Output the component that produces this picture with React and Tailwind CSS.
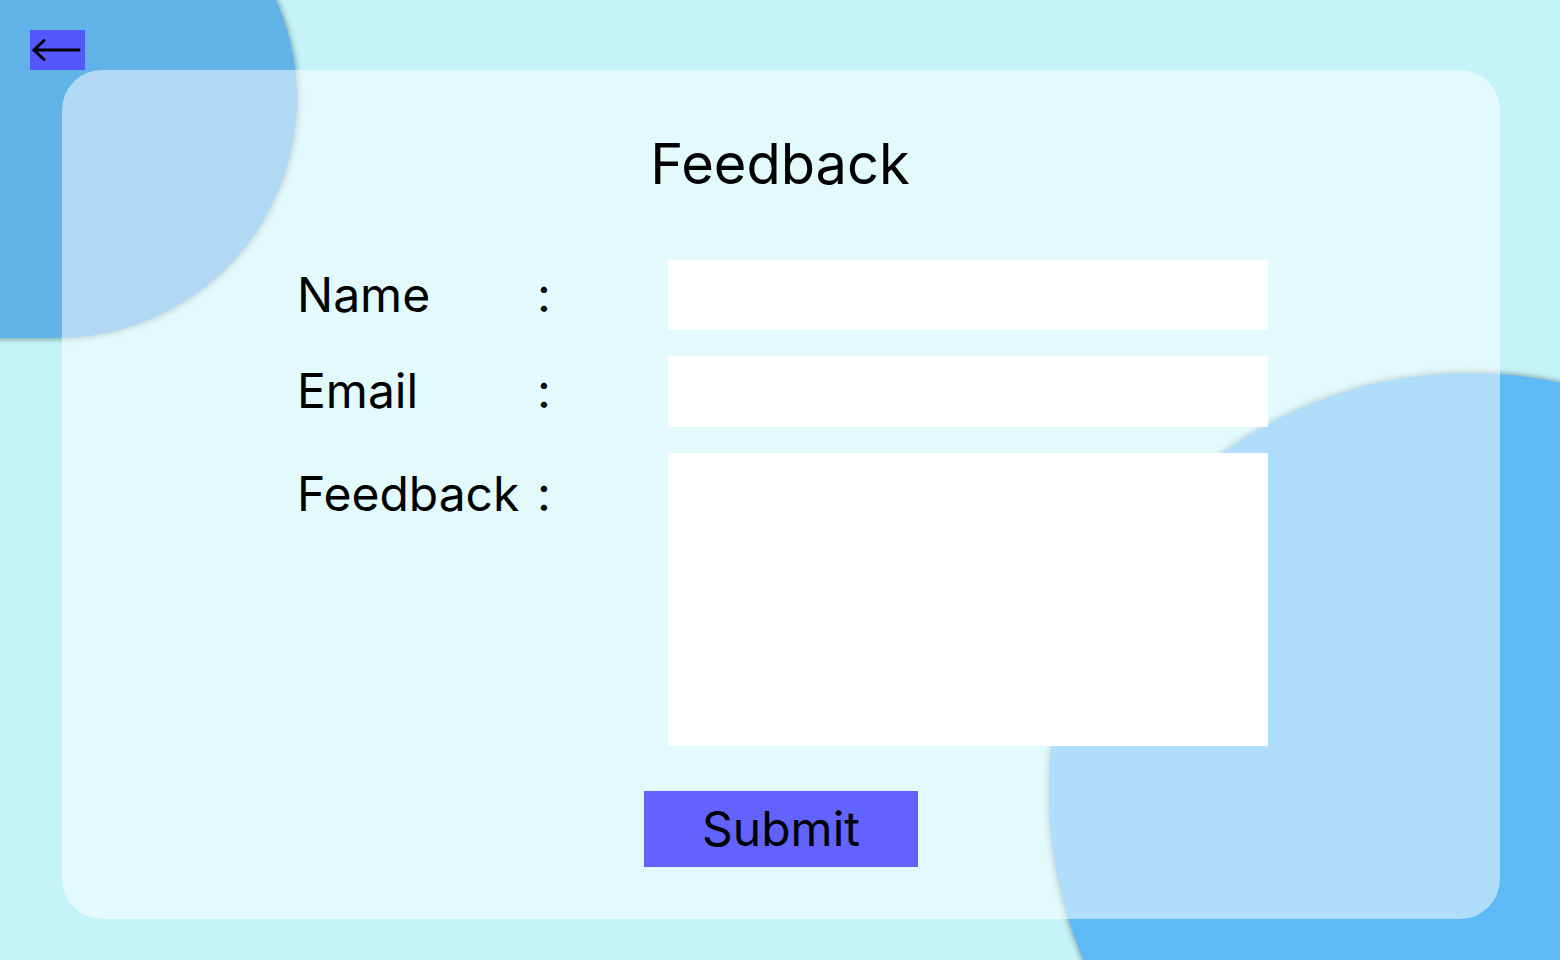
import { useState } from "react";

const Row = ({ label, children, labelClass = "" }) => (
  <div className="flex items-start w-full">
    <div className={`w-[240px] leading-[70px] ${labelClass}`}>{label}</div>
    <div className={`leading-[70px] ${labelClass}`}>:</div>
    <div className="ml-auto">{children}</div>
  </div>
);

const App = () => {
  const [form, setForm] = useState({ name: "", email: "", feedback: "" });

  const update = (key) => (e) => setForm((prev) => ({ ...prev, [key]: e.target.value }));

  return (
    <div
      className="relative h-[960px] w-full overflow-hidden bg-[#c4f4f9] text-black"
      style={{ fontFamily: "Inter, 'Noto Sans', sans-serif" }}
    >
      {/* background blobs */}
      <div className="absolute left-[-313px] top-[-142px] w-[610px] h-[480px] rounded-full bg-[#62b3e8] shadow-[0_0_5px_2px_rgba(40,60,60,0.35)]" />
      <div className="absolute left-[1049px] top-[373px] w-[840px] h-[840px] rounded-full bg-[#5ebaf5] shadow-[0_0_5px_2px_rgba(40,60,60,0.35)]" />

      <div className="relative z-10 pt-[30px]">
        <button className="ml-[30px] flex h-10 w-[55px] bg-[#5258fc]">
          <svg width="55" height="40" viewBox="0 0 55 40" fill="none" stroke="black" strokeWidth="3" strokeLinecap="round" strokeLinejoin="round">
            <path d="M4 20H49" />
            <path d="M14 10.5L4 20L14 29.5" />
          </svg>
        </button>

        <div className="ml-[62px] mr-[60px] h-[849px] rounded-[40px] bg-white/50 flex flex-col items-center pt-[63px]">
          <h1 className="text-[56px] leading-[63px] font-normal -ml-[2px]">Feedback</h1>

          <div className="self-start mt-[64px] ml-[235px] w-[971px] flex flex-col gap-[26px] text-[48px]">
            <Row label="Name">
              <input value={form.name} onChange={update("name")} className="block w-[600px] h-[70px] bg-white outline-none px-3 text-2xl" />
            </Row>
            <Row label="Email">
              <input value={form.email} onChange={update("email")} className="block w-[600px] h-[71px] bg-white outline-none px-3 text-2xl" />
            </Row>
            <Row label="Feedback" labelClass="pt-[6px]">
              <textarea value={form.feedback} onChange={update("feedback")} className="block w-[600px] h-[293px] bg-white outline-none resize-none p-3 text-2xl" />
            </Row>
          </div>

          <button className="mt-[45px] w-[274px] h-[76px] bg-[#6262fd] text-[48px] leading-[76px]">
            Submit
          </button>
        </div>
      </div>
    </div>
  );
};

export default App;
